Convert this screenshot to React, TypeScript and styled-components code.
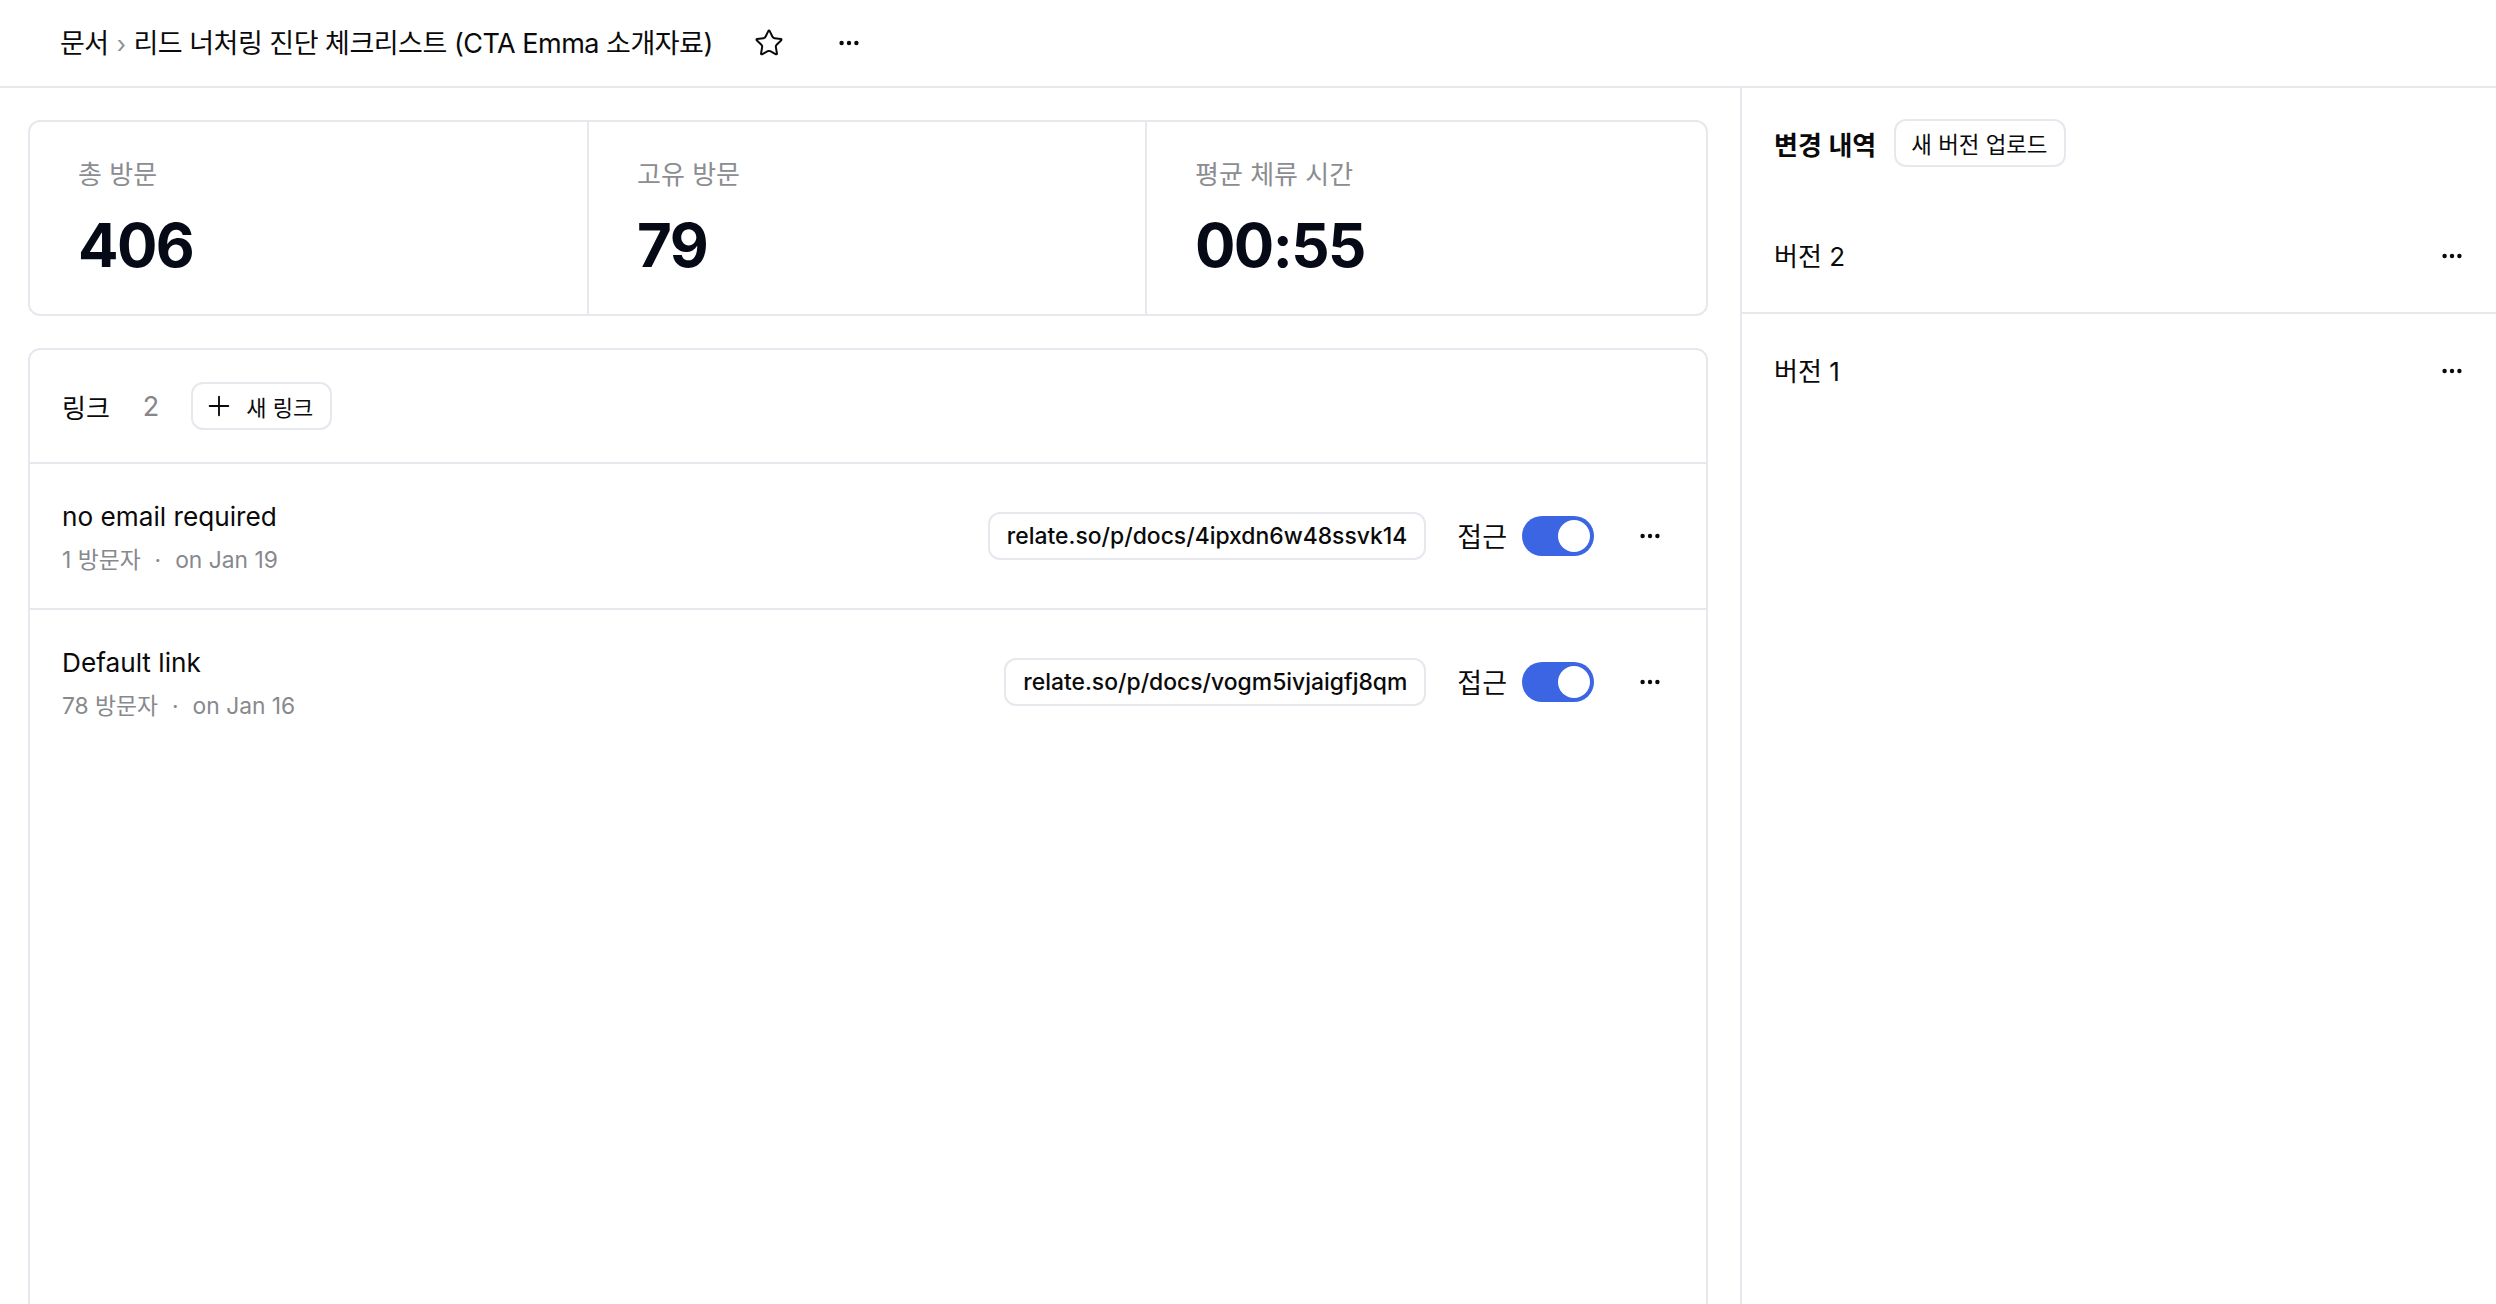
import React from "react";
import styled, { createGlobalStyle } from "styled-components";
import { Plus, Star } from "lucide-react";

const Global = createGlobalStyle`
  html, body { margin: 0; padding: 0; background: #fff; }
  body { font-family: Inter, "Noto Sans CJK KR", sans-serif; color: #0a0a0a; }
  * { box-sizing: border-box; }
`;

const Page = styled.div`
  width: 2496px;
  height: 1304px;
  display: flex;
  flex-direction: column;
  overflow: hidden;
`;
const TopBar = styled.header`
  height: 88px;
  flex: none;
  display: flex;
  align-items: center;
  padding-left: 60px;
  border-bottom: 2px solid #e6e8ee;
`;
const Crumb = styled.div`
  font-size: 27px;
  white-space: nowrap;
  letter-spacing: -0.5px;
  padding-bottom: 4px;
`;
const Sep = styled.span`
  color: #8a8f98;
  margin: 0 8px;
  font-size: 24px;
`;
const IconSlot = styled.span<{ $ml: number }>`
  display: inline-flex;
  margin-left: ${(p) => p.$ml}px;
  color: #0a0a0a;
`;
const Body = styled.div`
  flex: 1;
  min-height: 0;
  display: flex;
`;
const Main = styled.main`
  width: 1740px;
  flex: none;
  padding: 32px 32px 0 28px;
  display: flex;
  flex-direction: column;
  gap: 32px;
  overflow: hidden;
`;
const Aside = styled.aside`
  flex: 1;
  border-left: 2px solid #e6e8ee;
`;
const Stats = styled.section`
  display: grid;
  grid-template-columns: 557px 558px 1fr;
  height: 196px;
  flex: none;
  border: 2px solid #e6e8ee;
  border-radius: 12px;
`;
const Stat = styled.div`
  padding: 33px 48px;
  & + & { border-left: 2px solid #e6e8ee; }
`;
const StatLabel = styled.div`
  font-size: 26px;
  line-height: 40px;
  color: #8b8d91;
`;
const StatValue = styled.div`
  font-size: 60px;
  font-weight: 650;
  line-height: 72px;
  margin-top: 14px;
  letter-spacing: -1.6px;
  color: #060a16;
`;
const Links = styled.section`
  height: 1200px;
  flex: none;
  border: 2px solid #e6e8ee;
  border-radius: 12px;
`;
const LinksHead = styled.div`
  height: 114px;
  display: flex;
  align-items: center;
  padding-left: 32px;
  border-bottom: 2px solid #e6e8ee;
`;
const LinksTitle = styled.span`
  font-size: 26px;
  font-weight: 400;
`;
const Count = styled.span`
  font-size: 27px;
  color: #84868a;
  margin-left: 33px;
`;
const Button = styled.button<{ $ml: number; $size: number }>`
  height: 48px;
  display: inline-flex;
  align-items: center;
  gap: 11px;
  padding: 0 17px 0 15px;
  margin-left: ${(p) => p.$ml}px;
  background: #fff;
  border: 2px solid #e6e8ee;
  border-radius: 12px;
  font: 400 ${(p) => p.$size}px Inter, "Noto Sans CJK KR", sans-serif;
  color: #0a0a0a;
`;
const PlusIcon = styled(Plus)`
  margin-left: -5px;
`;
const Row = styled.div`
  box-sizing: content-box;
  height: 144px;
  display: flex;
  align-items: center;
  padding: 0 32px;
  & + & { border-top: 2px solid #e6e8ee; }
`;
const RowInfo = styled.div`
  flex: 1;
`;
const RowName = styled.div`
  font-size: 26.2px;
  line-height: 40px;
`;
const RowMeta = styled.div`
  font-size: 22.8px;
  line-height: 32px;
  margin-top: 7px;
  color: #87898d;
`;
const Dot = styled.span`
  margin: 0 14px;
`;
const UrlPill = styled.div`
  height: 48px;
  display: flex;
  align-items: center;
  padding: 0 17px;
  border: 2px solid #e6e8ee;
  border-radius: 12px;
  font-size: 22.9px;
  font-weight: 500;
  white-space: nowrap;
`;
const AccessLabel = styled.span`
  font-size: 27px;
  margin-left: 31px;
  margin-right: 15px;
  padding-bottom: 2px;
`;
const Toggle = styled.span`
  width: 72px;
  height: 40px;
  padding: 4px;
  display: flex;
  justify-content: flex-end;
  border-radius: 20px;
  background: #3b65e2;
`;
const Knob = styled.span`
  width: 32px;
  height: 32px;
  border-radius: 50%;
  background: #fff;
`;
const RowMore = styled.span`
  display: inline-flex;
  margin-left: 44px;
  margin-right: 12px;
`;
const AsideHead = styled.div`
  height: 110px;
  display: flex;
  align-items: center;
  padding-left: 32px;
`;
const AsideTitle = styled.span`
  font-size: 26px;
  font-weight: 600;
`;
const Version = styled.div`
  height: 114px;
  display: flex;
  align-items: center;
  justify-content: space-between;
  padding: 1px 32px 0;
  font-size: 26px;
  & + & { border-top: 2px solid #e6e8ee; }
`;
const VersionName = styled.span`
  padding-bottom: 3px;
`;

const Dots = () => (
  <svg width="24" height="24" viewBox="0 0 24 24" fill="#0a0a0a">
    <circle cx="4.6" cy="12" r="2.2" />
    <circle cx="12" cy="12" r="2.2" />
    <circle cx="19.4" cy="12" r="2.2" />
  </svg>
);

const rows = [
  { name: "no email required", meta: "1 방문자", date: "on Jan 19", url: "relate.so/p/docs/4ipxdn6w48ssvk14" },
  { name: "Default link", meta: "78 방문자", date: "on Jan 16", url: "relate.so/p/docs/vogm5ivjaigfj8qm" },
];

export default function App() {
  return (
    <Page>
      <Global />
      <TopBar>
        <Crumb>
          문서<Sep>›</Sep>리드 너처링 진단 체크리스트 (CTA Emma 소개자료)
        </Crumb>
        <IconSlot $ml={41}>
          <Star size={30} strokeWidth={1.6} />
        </IconSlot>
        <IconSlot $ml={53}>
          <Dots />
        </IconSlot>
      </TopBar>
      <Body>
        <Main>
          <Stats>
            <Stat>
              <StatLabel>총 방문</StatLabel>
              <StatValue>406</StatValue>
            </Stat>
            <Stat>
              <StatLabel>고유 방문</StatLabel>
              <StatValue>79</StatValue>
            </Stat>
            <Stat>
              <StatLabel>평균 체류 시간</StatLabel>
              <StatValue>00:55</StatValue>
            </Stat>
          </Stats>
          <Links>
            <LinksHead>
              <LinksTitle>링크</LinksTitle>
              <Count>2</Count>
              <Button $ml={32} $size={22}>
                <PlusIcon size={32} strokeWidth={1.4} />
                새 링크
              </Button>
            </LinksHead>
            {rows.map((r) => (
              <Row key={r.url}>
                <RowInfo>
                  <RowName>{r.name}</RowName>
                  <RowMeta>
                    {r.meta}
                    <Dot>·</Dot>
                    {r.date}
                  </RowMeta>
                </RowInfo>
                <UrlPill>{r.url}</UrlPill>
                <AccessLabel>접근</AccessLabel>
                <Toggle>
                  <Knob />
                </Toggle>
                <RowMore>
                  <Dots />
                </RowMore>
              </Row>
            ))}
          </Links>
        </Main>
        <Aside>
          <AsideHead>
            <AsideTitle>변경 내역</AsideTitle>
            <Button $ml={18} $size={22.4}>새 버전 업로드</Button>
          </AsideHead>
          <Version>
            <VersionName>버전 2</VersionName>
            <Dots />
          </Version>
          <Version>
            <VersionName>버전 1</VersionName>
            <Dots />
          </Version>
        </Aside>
      </Body>
    </Page>
  );
}
